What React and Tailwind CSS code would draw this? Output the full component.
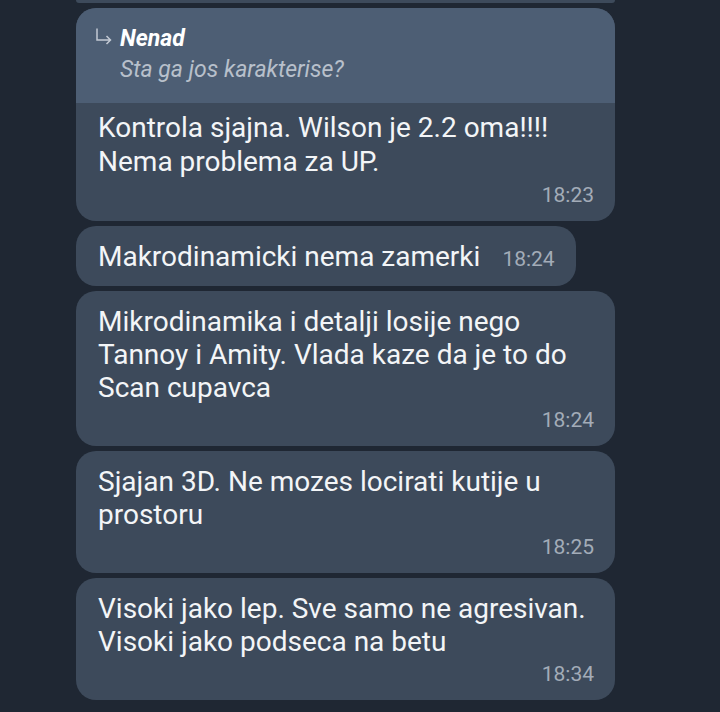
import React from "react";

const messages = [
  { text: "Mikrodinamika i detalji losije nego Tannoy i Amity. Vlada kaze da je to do Scan cupavca", time: "18:24" },
  { text: "Sjajan 3D. Ne mozes locirati kutije u prostoru", time: "18:25" },
  { text: "Visoki jako lep. Sve samo ne agresivan. Visoki jako podseca na betu", time: "18:34" },
];

const Bubble = ({ text, time }) => (
  <div className="w-[539px] rounded-[20px] bg-[#3d4a5b] pl-[22px] pr-[21px] pt-[14px] pb-[12px]">
    <div className="text-[28px] leading-[33px] text-[#f3f5f7]">{text}</div>
    <div className="mt-[2px] text-right text-[21px] leading-[28px] text-[#a3acb8]">{time}</div>
  </div>
);

export default function App() {
  return (
    <div
      className="w-[720px] h-[712px] overflow-hidden bg-[#1f2733]"
      style={{ fontFamily: "Roboto, 'Noto Sans', sans-serif" }}
    >
      <div className="pl-[76px] flex flex-col gap-[5px]">
        {/* tail of previous message */}
        <div className="w-[539px] h-[3px] rounded-b-[20px] bg-[#3d4a5b]" />

        {/* reply bubble */}
        <div className="w-[539px] rounded-[20px] bg-[#3d4a5b] overflow-hidden">
          <div className="bg-[#4d5e74] pt-[16px] pb-[17px] pl-[19px] pr-4 flex">
            <svg width="25" height="18" viewBox="0 0 25 18" className="shrink-0 mt-[4px]">
              <path
                d="M2 0.5 V12 H15.5 M11.5 8 L15.5 12 L11.5 16"
                fill="none"
                stroke="#c3cad4"
                strokeWidth="1.5"
              />
            </svg>
            <div>
              <div className="text-[23px] leading-[30px] font-bold italic text-white">Nenad</div>
              <div className="text-[23px] leading-[32px] italic text-[#b8c0cb]">Sta ga jos karakterise?</div>
            </div>
          </div>
          <div className="pl-[22px] pr-[21px] pt-[8px] pb-[12px]">
            <div className="text-[28px] leading-[34px] text-[#f3f5f7]">
              Kontrola sjajna. Wilson je 2.2 oma!!!!
              <br />
              Nema problema za UP.
            </div>
            <div className="mt-[2px] text-right text-[21px] leading-[28px] text-[#a3acb8]">18:23</div>
          </div>
        </div>

        {/* short inline bubble */}
        <div className="self-start inline-flex items-baseline rounded-[20px] bg-[#3d4a5b] pl-[22px] pr-[21px] pt-[14px] pb-[13px]">
          <span className="text-[28px] leading-[33px] text-[#f3f5f7]">Makrodinamicki nema zamerki</span>
          <span className="ml-[22px] text-[21px] leading-[28px] text-[#a3acb8]">18:24</span>
        </div>

        {messages.map((m) => (
          <Bubble key={m.time + m.text} text={m.text} time={m.time} />
        ))}
      </div>
    </div>
  );
}
